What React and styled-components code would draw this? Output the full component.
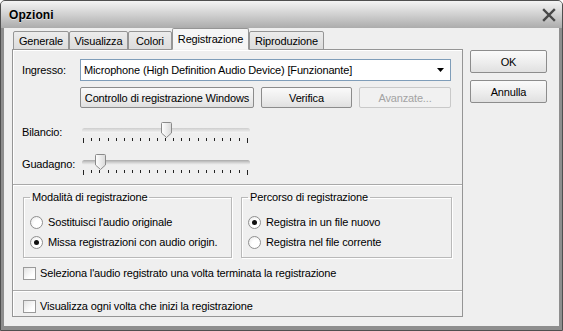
import React from 'react'
import styled, { createGlobalStyle } from 'styled-components'

const GlobalStyle = createGlobalStyle`
  html, body {
    margin: 0;
    padding: 0;
    background: #ffffff;
  }
  body {
    font-family: 'Liberation Sans', Arial, sans-serif;
    font-size: 11px;
    letter-spacing: -0.15px;
    color: #000;
  }
  * {
    box-sizing: border-box;
  }
`

const Window = styled.div`
  width: 563px;
  height: 331px;
  display: flex;
  flex-direction: column;
  border: 1px solid #4f4f4f;
  border-radius: 5px 5px 0 0;
  overflow: hidden;
  background: #8e8e8e;
`

const TitleBar = styled.div`
  height: 27px;
  flex: none;
  display: flex;
  align-items: center;
  justify-content: space-between;
  padding: 1px 6px 0 8px;
  background: linear-gradient(#f4f4f4, #d4d4d4 45%, #acacac);
`

const Title = styled.span`
  font-weight: bold;
  font-size: 12px;
  letter-spacing: 0.1px;
  text-shadow: 0 1px 0 rgba(255, 255, 255, 0.5);
`

const Body = styled.div`
  flex: 1;
  display: flex;
  gap: 7px;
  margin: 0 3px 4px 3px;
  padding: 0 11px 9px 8px;
  background: #efefef;
`

const Main = styled.div`
  width: 451px;
  display: flex;
  flex-direction: column;
`

const TabStrip = styled.div`
  display: flex;
  align-items: flex-end;
  height: 22px;
  padding-left: 1px;
  margin-bottom: -1px;
  position: relative;
  z-index: 1;
`

const Tab = styled.div`
  width: ${p => p.$w}px;
  height: ${p => (p.$active ? 22 : 19)}px;
  display: flex;
  align-items: center;
  justify-content: center;
  padding-top: ${p => (p.$active ? 0 : 1)}px;
  border: 1px solid #959595;
  border-bottom-color: ${p => (p.$active ? '#efefef' : '#959595')};
  border-radius: 2px 2px 0 0;
  background: ${p => (p.$active ? '#f5f5f5' : 'linear-gradient(#ececec, #dcdcdc)')};
  position: relative;
  z-index: ${p => (p.$active ? 2 : 1)};
`

const Panel = styled.div`
  flex: 1;
  display: flex;
  flex-direction: column;
  border: 1px solid #959595;
  box-shadow: inset 1px 1px 0 #ffffff;
  padding: 9px 11px 0 9px;
  background: #efefef;
`

const Row = styled.div`
  display: flex;
  align-items: center;
`

const FieldLabel = styled.span`
  width: 58px;
  flex: none;
`

const Combo = styled.div`
  width: 371px;
  height: 22px;
  display: flex;
  align-items: center;
  justify-content: space-between;
  padding: 0 6px 0 3px;
  border: 1px solid #7f9db9;
  background: #ffffff;
`

const ButtonRow = styled.div`
  display: flex;
  gap: 7px;
  margin-top: 6px;
  padding-left: 58px;
`

const Button = styled.button`
  width: ${p => p.$w}px;
  height: ${p => p.$h || 21}px;
  padding: 0;
  font-family: inherit;
  font-size: 11px;
  letter-spacing: -0.15px;
  color: ${p => (p.disabled ? '#a3a3a3' : '#000')};
  border: 1px solid ${p => (p.disabled ? '#c9c9c9' : '#8c8c8c')};
  border-radius: 2px;
  background: ${p => (p.disabled ? '#f1f1f1' : 'linear-gradient(#fafafa, #ececec 60%, #e0e0e0)')};
`

const SliderRow = styled.div`
  display: flex;
  align-items: flex-start;
  margin-top: ${p => p.$mt}px;
`

const SliderLabel = styled.span`
  width: 58px;
  flex: none;
  line-height: 14px;
  margin-top: 3px;
`

const SliderBox = styled.div`
  position: relative;
  width: 172px;
  height: 24px;
`

const Track = styled.div`
  position: absolute;
  left: 2px;
  right: 2px;
  top: 6px;
  height: 5px;
  border-radius: 3px;
  background: ${p => (p.$focus
    ? 'linear-gradient(#a9a9a9, #d9d9d9 60%, #f2f2f2)'
    : 'linear-gradient(#cdcdcd, #e6e6e6 60%, #f7f7f7)')};
`

const Ticks = styled.div`
  position: absolute;
  left: 3px;
  right: 4px;
  top: 16px;
  display: flex;
  justify-content: space-between;
  align-items: flex-start;
`

const Tick = styled.span`
  width: 1px;
  height: ${p => (p.$end ? 5 : 3)}px;
  background: #222;
`

const Thumb = styled.svg`
  position: absolute;
  top: 0;
  width: 11px;
  height: 16px;
  margin-left: -5px;
`

const Separator = styled.div`
  height: 2px;
  margin: ${p => p.$mt}px -11px 0 -9px;
  border-top: 1px solid #a9a9a9;
  border-bottom: 1px solid #ffffff;
`

const Groups = styled.div`
  display: flex;
  gap: 9px;
  margin: 5px -1px 0 1px;
`

const Group = styled.fieldset`
  width: ${p => p.$w}px;
  margin: 0;
  padding: 8px 0 5px 6px;
  border: 1px solid #b9b9b9;
  box-shadow: inset 1px 1px 0 #ffffff, 1px 1px 0 #ffffff;
  min-width: 0;
`

const Legend = styled.legend`
  padding: 0 2px;
  line-height: 13px;
  font-size: 11px;
`

const OptionRow = styled.label`
  display: flex;
  align-items: center;
  gap: 5px;
  height: 20px;
`

const Radio = styled.span`
  width: 13px;
  height: 13px;
  flex: none;
  border-radius: 50%;
  border: 1px solid #8f8f8f;
  background: radial-gradient(circle at 65% 65%, #ffffff 40%, #e4e4e4);
  display: flex;
  align-items: center;
  justify-content: center;
  &::after {
    content: '';
    width: 5px;
    height: 5px;
    border-radius: 50%;
    background: ${p => (p.$checked ? '#111' : 'transparent')};
  }
`

const CheckRow = styled.label`
  display: flex;
  align-items: center;
  gap: 4px;
  height: 20px;
  margin-top: ${p => p.$mt}px;
  margin-left: 1px;
`

const CheckBox = styled.span`
  width: 13px;
  height: 13px;
  flex: none;
  border: 1px solid #9a9a9a;
  background: linear-gradient(135deg, #e2e2e2, #ffffff 70%);
`

const Side = styled.div`
  display: flex;
  flex-direction: column;
  gap: 7px;
  padding-top: 22px;
`

const CloseIcon = () => (
  <svg width="14" height="14" viewBox="0 0 14 14">
    <path d="M2 2 L12 12 M12 2 L2 12" stroke="#474747" strokeWidth="2.4" strokeLinecap="square" />
  </svg>
)

const ComboArrow = () => (
  <svg width="7" height="4" viewBox="0 0 7 4">
    <path d="M0 0 H7 L3.5 4 Z" fill="#000" />
  </svg>
)

const Slider = ({ value, focus }) => {
  const ticks = Array.from({ length: 21 }, (_, i) => i)
  const left = 3 + (value / 20) * 165
  return (
    <SliderBox>
      <Track $focus={focus} />
      <Ticks>
        {ticks.map(i => (
          <Tick key={i} $end={i === 0 || i === 20} />
        ))}
      </Ticks>
      <Thumb viewBox="0 0 11 16" style={{ left }}>
        <defs>
          <linearGradient id={`thumb${value}`} x1="0" y1="0" x2="1" y2="0">
            <stop offset="0" stopColor="#ffffff" />
            <stop offset="1" stopColor="#d9d9d9" />
          </linearGradient>
        </defs>
        <path
          d="M1.5 0.5 H9.5 Q10.5 0.5 10.5 1.5 V11 L5.5 15.5 L0.5 11 V1.5 Q0.5 0.5 1.5 0.5 Z"
          fill={`url(#thumb${value})`}
          stroke="#8a8a8a"
        />
      </Thumb>
    </SliderBox>
  )
}

const tabs = [
  { label: 'Generale', w: 56 },
  { label: 'Visualizza', w: 59 },
  { label: 'Colori', w: 44 },
  { label: 'Registrazione', w: 77 },
  { label: 'Riproduzione', w: 75 },
]

export default function App() {
  return (
    <>
      <GlobalStyle />
      <Window>
        <TitleBar>
          <Title>Opzioni</Title>
          <CloseIcon />
        </TitleBar>
        <Body>
          <Main>
            <TabStrip>
              {tabs.map(t => (
                <Tab key={t.label} $w={t.w} $active={t.label === 'Registrazione'}>{t.label}</Tab>
              ))}
            </TabStrip>
            <Panel>
              <Row>
                <FieldLabel>Ingresso:</FieldLabel>
                <Combo>
                  <span>Microphone (High Definition Audio Device) [Funzionante]</span>
                  <ComboArrow />
                </Combo>
              </Row>
              <ButtonRow>
                <Button $w={174}>Controllo di registrazione Windows</Button>
                <Button $w={91}>Verifica</Button>
                <Button $w={92} disabled>Avanzate...</Button>
              </ButtonRow>
              <SliderRow $mt={14}>
                <SliderLabel>Bilancio:</SliderLabel>
                <Slider value={10} />
              </SliderRow>
              <SliderRow $mt={8}>
                <SliderLabel>Guadagno:</SliderLabel>
                <Slider value={2} focus />
              </SliderRow>
              <Separator $mt={6} />
              <Groups>
                <Group $w={210}>
                  <Legend>Modalità di registrazione</Legend>
                  <OptionRow><Radio />Sostituisci l'audio originale</OptionRow>
                  <OptionRow><Radio $checked />Missa registrazioni con audio origin.</OptionRow>
                </Group>
                <Group $w={212}>
                  <Legend>Percorso di registrazione</Legend>
                  <OptionRow><Radio $checked />Registra in un file nuovo</OptionRow>
                  <OptionRow><Radio />Registra nel file corrente</OptionRow>
                </Group>
              </Groups>
              <CheckRow $mt={5}>
                <CheckBox />
                Seleziona l'audio registrato una volta terminata la registrazione
              </CheckRow>
              <Separator $mt={7} />
              <CheckRow $mt={4}>
                <CheckBox />
                Visualizza ogni volta che inizi la registrazione
              </CheckRow>
            </Panel>
          </Main>
          <Side>
            <Button $w={77} $h={23}>OK</Button>
            <Button $w={77} $h={23}>Annulla</Button>
          </Side>
        </Body>
      </Window>
    </>
  )
}
